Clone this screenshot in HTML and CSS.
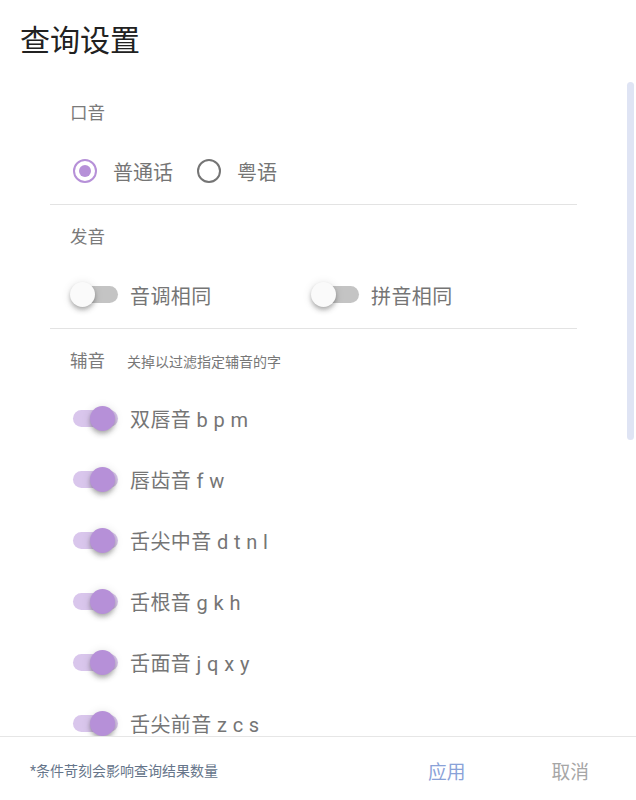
FILE: index.html
```html
<!DOCTYPE html>
<html lang="zh-CN">
<head>
  <meta charset="UTF-8" />
  <title>查询设置</title>
  <link rel="stylesheet" href="styles.css">
</head>
<body>
  <div class="dialog">
    <div class="dialog-header">
      <h1 class="dialog-title">查询设置</h1>
    </div>

    <div class="dialog-body">
      <div class="scroll-thumb"></div>

      <!-- 口音 -->
      <div class="section">
        <div class="section-label">口音</div>
        <div class="radio-row">
          <label class="radio checked"><span class="radio-circle"></span>普通话</label>
          <label class="radio"><span class="radio-circle"></span>粤语</label>
        </div>
      </div>

      <!-- 发音 -->
      <div class="section">
        <div class="section-label">发音</div>
        <div class="switch-grid">
          <label class="switch-item"><span class="switch"><span class="track"></span><span class="thumb"></span></span>音调相同</label>
          <label class="switch-item"><span class="switch"><span class="track"></span><span class="thumb"></span></span>拼音相同</label>
        </div>
      </div>

      <!-- 辅音 -->
      <div class="section no-border">
        <div class="section-label">辅音<span class="section-hint">关掉以过滤指定辅音的字</span></div>
        <div class="switch-list">
          <label class="switch-item"><span class="switch on"><span class="track"></span><span class="thumb"></span></span>双唇音 b p m</label>
          <label class="switch-item"><span class="switch on"><span class="track"></span><span class="thumb"></span></span>唇齿音 f w</label>
          <label class="switch-item"><span class="switch on"><span class="track"></span><span class="thumb"></span></span>舌尖中音 d t n l</label>
          <label class="switch-item"><span class="switch on"><span class="track"></span><span class="thumb"></span></span>舌根音 g k h</label>
          <label class="switch-item"><span class="switch on"><span class="track"></span><span class="thumb"></span></span>舌面音 j q x y</label>
          <label class="switch-item"><span class="switch on"><span class="track"></span><span class="thumb"></span></span>舌尖前音 z c s</label>
        </div>
      </div>
    </div>

    <div class="dialog-footer">
      <div class="footer-note">*条件苛刻会影响查询结果数量</div>
      <div class="footer-actions">
        <button class="btn btn-apply">应用</button>
        <button class="btn btn-cancel">取消</button>
      </div>
    </div>
  </div>
</body>
</html>
```

FILE: styles.css
```css
body {
  margin: 0;
  background: #fff;
  font-family: Roboto, "Noto Sans CJK SC", sans-serif;
  color: #757575;
}

.dialog {
  width: 636px;
  height: 800px;
  display: flex;
  flex-direction: column;
  background: #fff;
}

.dialog-header {
  height: 81px;
  padding: 0 20px;
  display: flex;
  align-items: center;
  flex-shrink: 0;
}

.dialog-title {
  margin: 0;
  font-size: 30px;
  font-weight: normal;
  color: #212121;
  line-height: 1;
  padding-top: 1px;
}

.dialog-body {
  flex: 1;
  position: relative;
  overflow: hidden;
  padding: 0 59px 0 50px;
}

.scroll-thumb {
  position: absolute;
  top: 1px;
  right: 2px;
  width: 7px;
  height: 358px;
  border-radius: 4px;
  background: #dfe4f4;
}

.section {
  padding: 20px 0 13px;
  border-bottom: 1px solid #e3e3e3;
}

.section.no-border {
  border-bottom: none;
}

.section-label {
  padding-left: 20px;
  height: 24px;
  line-height: 24px;
  font-size: 17.5px;
  color: #7a7a7a;
}

.section-hint {
  margin-left: 22px;
  font-size: 14px;
  color: #777;
}

/* radio */
.radio-row {
  margin-top: 26px;
  height: 40px;
  padding-left: 20px;
  display: flex;
  align-items: center;
  gap: 21px;
}

.radio {
  display: flex;
  align-items: center;
  font-size: 20px;
  color: #757575;
}

.radio-circle {
  box-sizing: border-box;
  width: 24px;
  height: 24px;
  margin: 0 16px 0 3px;
  border: 2.4px solid #757575;
  border-radius: 50%;
  display: flex;
  align-items: center;
  justify-content: center;
}

.radio.checked .radio-circle {
  border-color: #b690d8;
}

.radio.checked .radio-circle::after {
  content: "";
  width: 12px;
  height: 12px;
  border-radius: 50%;
  background: #b690d8;
}

/* switch */
.switch-grid {
  margin-top: 26px;
  padding-left: 20px;
  display: grid;
  grid-template-columns: 241px auto;
}

.switch-list {
  margin-top: 15px;
  padding-left: 20px;
}

.switch-item {
  height: 40px;
  display: flex;
  align-items: center;
  font-size: 20px;
  color: #757575;
  letter-spacing: 0.4px;
}

.switch-list .switch-item {
  height: 61px;
}

.switch {
  position: relative;
  width: 48px;
  height: 26px;
  margin-right: 12px;
  flex-shrink: 0;
}

.switch .track {
  position: absolute;
  left: 3px;
  top: 4px;
  width: 45px;
  height: 17px;
  border-radius: 9px;
  background: #c4c4c4;
}

.switch .thumb {
  position: absolute;
  left: 0;
  top: 0;
  width: 25px;
  height: 25px;
  border-radius: 50%;
  background: #fafafa;
  box-shadow: 0 2px 4px -1px rgba(0,0,0,0.2), 0 4px 5px 0 rgba(0,0,0,0.14), 0 1px 10px 0 rgba(0,0,0,0.12);
}

.switch.on .track {
  background: #d9c6ec;
}

.switch.on .thumb {
  left: 20px;
  background: #b690d8;
}

/* footer */
.dialog-footer {
  height: 60px;
  flex-shrink: 0;
  border-top: 1px solid #e6e6e6;
  padding: 3px 47px 0 30px;
  display: flex;
  align-items: center;
  justify-content: space-between;
}

.footer-note {
  font-size: 14px;
  color: #66758a;
}

.footer-actions {
  display: flex;
  gap: 86px;
}

.btn {
  background: none;
  border: none;
  padding: 0;
  font-family: Roboto, "Noto Sans CJK SC", sans-serif;
  font-size: 18.75px;
  cursor: pointer;
}

.btn-apply {
  color: #8aa2d8;
}

.btn-cancel {
  color: #a6a6a6;
}
```
